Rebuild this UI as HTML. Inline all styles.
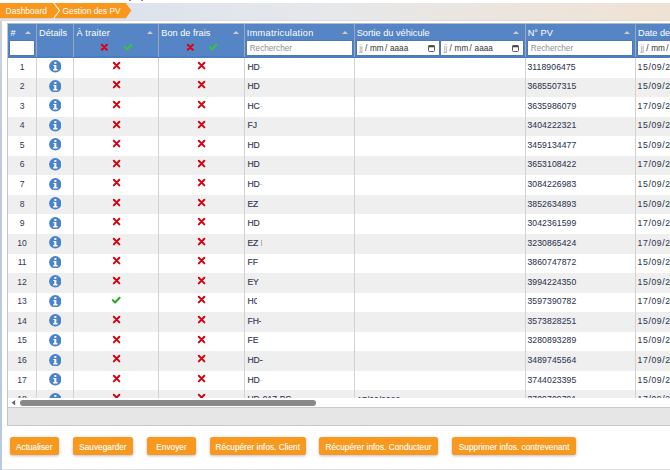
<!DOCTYPE html><html><head><meta charset="utf-8"><style>
html,body{margin:0;padding:0;}
body{width:670px;height:470px;overflow:hidden;position:relative;background:#fff;font-family:"Liberation Sans", sans-serif;}
.a{position:absolute;}
.t{position:absolute;white-space:nowrap;line-height:1;}
.b{-webkit-text-stroke:0.15px #2f3850;}
.n{-webkit-text-stroke:0.07px #2f3850;}
</style></head><body>
<div class="a" style="left:0;top:3px;width:670px;height:18px;background:linear-gradient(to right,#dde3ec 20%,#e7e8ea 50%,#efe2d2 100%);"></div>
<div class="a" style="left:0;top:20.2px;width:670px;height:1px;background:#d6d6d6;opacity:.7"></div>
<svg class="a" style="left:0;top:0" width="140" height="22" viewBox="0 0 140 22"><polygon points="0,3 125.8,3 131.3,10.6 125.8,18.2 0,18.2" fill="#f8971c"/><polyline points="53.8,3 59.6,10.6 53.8,18.2" fill="none" stroke="#fff6ec" stroke-width="1.1"/></svg>
<div class="t" style="left:5.6px;top:7.0px;font-size:8.4px;letter-spacing:0.05px;color:#fff;">Dashboard</div>
<div class="t" style="left:62.5px;top:7.0px;font-size:8.4px;color:#fff;">Gestion des PV</div>
<div class="a" style="left:0;top:20.5px;width:2px;height:450px;background:linear-gradient(to bottom,#cdd1d8,#bfcbdc 25%,#b9c8de)"></div>
<div class="a" style="left:2px;top:468.5px;width:668px;height:1.5px;background:#e2e2e2"></div>
<div class="a" style="left:7px;top:23px;width:663px;height:1px;background:#b8bcc4"></div>
<div class="a" style="left:7px;top:23px;width:1px;height:403px;background:#c4c4c4"></div>
<div class="a" style="left:8px;top:24px;width:662px;height:33.5px;background:#5585c5"></div>
<div class="a" style="left:8px;top:56px;width:662px;height:1.7px;background:#4b7dc0"></div>
<div class="a" style="left:8px;top:58.10px;width:662px;height:19.55px;background:#ffffff"></div>
<div class="a" style="left:8px;top:77.65px;width:662px;height:19.55px;background:#efefef"></div>
<div class="a" style="left:8px;top:97.20px;width:662px;height:19.55px;background:#ffffff"></div>
<div class="a" style="left:8px;top:116.75px;width:662px;height:19.55px;background:#efefef"></div>
<div class="a" style="left:8px;top:136.30px;width:662px;height:19.55px;background:#ffffff"></div>
<div class="a" style="left:8px;top:155.85px;width:662px;height:19.55px;background:#efefef"></div>
<div class="a" style="left:8px;top:175.40px;width:662px;height:19.55px;background:#ffffff"></div>
<div class="a" style="left:8px;top:194.95px;width:662px;height:19.55px;background:#efefef"></div>
<div class="a" style="left:8px;top:214.50px;width:662px;height:19.55px;background:#ffffff"></div>
<div class="a" style="left:8px;top:234.05px;width:662px;height:19.55px;background:#efefef"></div>
<div class="a" style="left:8px;top:253.60px;width:662px;height:19.55px;background:#ffffff"></div>
<div class="a" style="left:8px;top:273.15px;width:662px;height:19.55px;background:#efefef"></div>
<div class="a" style="left:8px;top:292.70px;width:662px;height:19.55px;background:#ffffff"></div>
<div class="a" style="left:8px;top:312.25px;width:662px;height:19.55px;background:#efefef"></div>
<div class="a" style="left:8px;top:331.80px;width:662px;height:19.55px;background:#ffffff"></div>
<div class="a" style="left:8px;top:351.35px;width:662px;height:19.55px;background:#efefef"></div>
<div class="a" style="left:8px;top:370.90px;width:662px;height:19.55px;background:#ffffff"></div>
<div class="a" style="left:8px;top:390.45px;width:662px;height:19.55px;background:#efefef"></div>
<div class="a" style="left:36.00px;top:24px;width:1px;height:33px;background:#9ba7b8"></div>
<div class="a" style="left:36.00px;top:57.5px;width:1px;height:340px;background:#d2d2d2"></div>
<div class="a" style="left:73.00px;top:24px;width:1px;height:33px;background:#9ba7b8"></div>
<div class="a" style="left:73.00px;top:57.5px;width:1px;height:340px;background:#d2d2d2"></div>
<div class="a" style="left:158.10px;top:24px;width:1px;height:33px;background:#9ba7b8"></div>
<div class="a" style="left:158.10px;top:57.5px;width:1px;height:340px;background:#d2d2d2"></div>
<div class="a" style="left:244.00px;top:24px;width:1px;height:33px;background:#9ba7b8"></div>
<div class="a" style="left:244.00px;top:57.5px;width:1px;height:340px;background:#d2d2d2"></div>
<div class="a" style="left:353.80px;top:24px;width:1px;height:33px;background:#9ba7b8"></div>
<div class="a" style="left:353.80px;top:57.5px;width:1px;height:340px;background:#d2d2d2"></div>
<div class="a" style="left:525.30px;top:24px;width:1px;height:33px;background:#9ba7b8"></div>
<div class="a" style="left:525.30px;top:57.5px;width:1px;height:340px;background:#d2d2d2"></div>
<div class="a" style="left:634.90px;top:24px;width:1px;height:33px;background:#9ba7b8"></div>
<div class="a" style="left:634.90px;top:57.5px;width:1px;height:340px;background:#d2d2d2"></div>
<div class="t" style="left:10.40px;top:28.7px;font-size:9.0px;letter-spacing:0.2px;color:#fff;">#</div>
<div class="t" style="left:39.10px;top:29.0px;font-size:9.2px;letter-spacing:0px;color:#fff;">Détails</div>
<div class="t" style="left:76.40px;top:29.0px;font-size:9.2px;letter-spacing:0.15px;color:#fff;">À traiter</div>
<div class="t" style="left:161.30px;top:29.0px;font-size:9.2px;letter-spacing:0px;color:#fff;">Bon de frais</div>
<div class="t" style="left:246.80px;top:29.0px;font-size:9.2px;letter-spacing:0.3px;color:#fff;">Immatriculation</div>
<div class="t" style="left:356.70px;top:29.0px;font-size:9.2px;letter-spacing:0px;color:#fff;">Sortie du véhicule</div>
<div class="t" style="left:527.70px;top:29.0px;font-size:9.2px;letter-spacing:0px;color:#fff;">N° PV</div>
<div class="t" style="left:638.00px;top:29.0px;font-size:9.2px;letter-spacing:0px;color:#fff;">Date de création</div>
<div style="position:absolute;left:24.90px;top:31.30px;width:0;height:0;border-left:3.3px solid transparent;border-right:3.3px solid transparent;border-bottom:3px solid #d5cbba"></div>
<div style="position:absolute;left:146.70px;top:31.30px;width:0;height:0;border-left:3.3px solid transparent;border-right:3.3px solid transparent;border-bottom:3px solid #d5cbba"></div>
<div style="position:absolute;left:232.70px;top:31.30px;width:0;height:0;border-left:3.3px solid transparent;border-right:3.3px solid transparent;border-bottom:3px solid #d5cbba"></div>
<div style="position:absolute;left:342.20px;top:31.30px;width:0;height:0;border-left:3.3px solid transparent;border-right:3.3px solid transparent;border-bottom:3px solid #d5cbba"></div>
<div style="position:absolute;left:513.30px;top:31.30px;width:0;height:0;border-left:3.3px solid transparent;border-right:3.3px solid transparent;border-bottom:3px solid #d5cbba"></div>
<div style="position:absolute;left:623.70px;top:31.30px;width:0;height:0;border-left:3.3px solid transparent;border-right:3.3px solid transparent;border-bottom:3px solid #d5cbba"></div>
<div class="a" style="left:10.20px;top:41px;width:24.00px;height:14.4px;background:#fff;box-shadow:0 0 0 0.6px #4672b4"></div>
<div class="a" style="left:246.70px;top:41px;width:105.50px;height:14.4px;background:#fff;box-shadow:0 0 0 0.6px #4672b4"></div><div class="t" style="left:249.70px;top:45.3px;font-size:8.2px;color:#8e8e8e;">Rechercher</div>
<div class="a" style="left:356.70px;top:41px;width:82.00px;height:14.4px;background:#fff;box-shadow:0 0 0 0.6px #4672b4"></div><div class="t" style="left:359.20px;top:44.6px;font-size:8.2px;color:#a0a0a0;">jj</div><div class="t" style="left:365.00px;top:44.6px;font-size:8.2px;color:#333;">/</div><div class="t" style="left:370.00px;top:44.6px;font-size:8.2px;color:#333;">mm</div><div class="t" style="left:385.00px;top:44.6px;font-size:8.2px;color:#333;">/</div><div class="t" style="left:390.00px;top:44.6px;font-size:8.2px;color:#333;">aaaa</div><svg class="a" style="left:427.50px;top:44.6px" width="7" height="7" viewBox="0 0 7 7"><rect x="0.5" y="0.5" width="6" height="6" rx="0.9" fill="none" stroke="#4a4a4a" stroke-width="0.9"/><rect x="0.5" y="0.5" width="6" height="1.8" fill="#4a4a4a"/></svg>
<div class="a" style="left:441.30px;top:41px;width:82.00px;height:14.4px;background:#fff;box-shadow:0 0 0 0.6px #4672b4"></div><div class="t" style="left:443.80px;top:44.6px;font-size:8.2px;color:#a0a0a0;">jj</div><div class="t" style="left:449.60px;top:44.6px;font-size:8.2px;color:#333;">/</div><div class="t" style="left:454.60px;top:44.6px;font-size:8.2px;color:#333;">mm</div><div class="t" style="left:469.60px;top:44.6px;font-size:8.2px;color:#333;">/</div><div class="t" style="left:474.60px;top:44.6px;font-size:8.2px;color:#333;">aaaa</div><svg class="a" style="left:512.10px;top:44.6px" width="7" height="7" viewBox="0 0 7 7"><rect x="0.5" y="0.5" width="6" height="6" rx="0.9" fill="none" stroke="#4a4a4a" stroke-width="0.9"/><rect x="0.5" y="0.5" width="6" height="1.8" fill="#4a4a4a"/></svg>
<div class="a" style="left:527.80px;top:41px;width:104.60px;height:14.4px;background:#fff;box-shadow:0 0 0 0.6px #4672b4"></div><div class="t" style="left:530.80px;top:45.3px;font-size:8.2px;color:#8e8e8e;">Rechercher</div>
<div class="a" style="left:638.00px;top:41px;width:122.00px;height:14.4px;background:#fff;box-shadow:0 0 0 0.6px #4672b4"></div><div class="t" style="left:640.50px;top:44.6px;font-size:8.2px;color:#a0a0a0;">jj</div><div class="t" style="left:646.30px;top:44.6px;font-size:8.2px;color:#333;">/</div><div class="t" style="left:651.30px;top:44.6px;font-size:8.2px;color:#333;">mm</div><div class="t" style="left:666.30px;top:44.6px;font-size:8.2px;color:#333;">/</div><div class="t" style="left:671.30px;top:44.6px;font-size:8.2px;color:#333;">aaaa</div><svg class="a" style="left:748.80px;top:44.6px" width="7" height="7" viewBox="0 0 7 7"><rect x="0.5" y="0.5" width="6" height="6" rx="0.9" fill="none" stroke="#4a4a4a" stroke-width="0.9"/><rect x="0.5" y="0.5" width="6" height="1.8" fill="#4a4a4a"/></svg>
<svg style="position:absolute;left:100.10px;top:42.90px" width="8.6" height="8.6" viewBox="-1 -1 8.6 8.6"><path d="M0.8 0.8 L5.8 5.8 M5.8 0.8 L0.8 5.8" stroke="#e00010" stroke-width="2.0" stroke-linecap="round"/></svg>
<svg style="position:absolute;left:122.70px;top:42.90px" width="10.2" height="8.2" viewBox="-1 -1 10.2 8.2"><path d="M0.8 3.10 L2.95 5.40 L7.40 0.8" fill="none" stroke="#2ecc2e" stroke-width="2.0" stroke-linecap="round" stroke-linejoin="round"/></svg>
<svg style="position:absolute;left:185.70px;top:42.90px" width="8.6" height="8.6" viewBox="-1 -1 8.6 8.6"><path d="M0.8 0.8 L5.8 5.8 M5.8 0.8 L0.8 5.8" stroke="#e00010" stroke-width="2.0" stroke-linecap="round"/></svg>
<svg style="position:absolute;left:208.10px;top:42.90px" width="10.2" height="8.2" viewBox="-1 -1 10.2 8.2"><path d="M0.8 3.10 L2.95 5.40 L7.40 0.8" fill="none" stroke="#2ecc2e" stroke-width="2.0" stroke-linecap="round" stroke-linejoin="round"/></svg>
<div class="t" style="left:14.10px;width:16px;text-align:center;top:62.73px;font-size:8.6px;color:#2f3850;">1</div>
<svg style="position:absolute;left:48.80px;top:60.28px" width="12.6" height="12.6" viewBox="0 0 12.6 12.6"><circle cx="6.3" cy="6.3" r="6.2" fill="#4a83ca"/><ellipse cx="6.35" cy="3.0" rx="1.25" ry="0.95" fill="#fff"/><path d="M4.4 4.9 L7.35 4.9 L7.35 9.1 L8.5 9.1 L8.5 10.4 L4.2 10.4 L4.2 9.1 L5.3 9.1 L5.3 6.1 L4.4 6.1 Z" fill="#fff"/></svg>
<svg style="position:absolute;left:111.60px;top:60.87px" width="9.2" height="9.2" viewBox="-1 -1 9.2 9.2"><path d="M0.8 0.8 L6.4 6.4 M6.4 0.8 L0.8 6.4" stroke="#d7000f" stroke-width="1.95" stroke-linecap="round"/></svg>
<svg style="position:absolute;left:196.90px;top:60.87px" width="9.2" height="9.2" viewBox="-1 -1 9.2 9.2"><path d="M0.8 0.8 L6.4 6.4 M6.4 0.8 L0.8 6.4" stroke="#d7000f" stroke-width="1.95" stroke-linecap="round"/></svg>
<div class="t b" style="left:247.4px;top:62.73px;font-size:8.6px;color:#2f3850;">HD<span style='display:inline-block;width:3px;overflow:hidden;vertical-align:top;color:#cfcfcf;-webkit-text-stroke:0'>-</span></div>
<div class="t n" style="left:527.4px;top:62.73px;font-size:8.6px;letter-spacing:0.12px;color:#2f3850;">3118906475</div>
<div class="t n" style="left:637.6px;top:62.73px;font-size:8.6px;letter-spacing:0.62px;color:#2f3850;">15/09/2022</div>
<div class="t" style="left:14.10px;width:16px;text-align:center;top:82.28px;font-size:8.6px;color:#2f3850;">2</div>
<svg style="position:absolute;left:48.80px;top:79.83px" width="12.6" height="12.6" viewBox="0 0 12.6 12.6"><circle cx="6.3" cy="6.3" r="6.2" fill="#4a83ca"/><ellipse cx="6.35" cy="3.0" rx="1.25" ry="0.95" fill="#fff"/><path d="M4.4 4.9 L7.35 4.9 L7.35 9.1 L8.5 9.1 L8.5 10.4 L4.2 10.4 L4.2 9.1 L5.3 9.1 L5.3 6.1 L4.4 6.1 Z" fill="#fff"/></svg>
<svg style="position:absolute;left:111.60px;top:80.43px" width="9.2" height="9.2" viewBox="-1 -1 9.2 9.2"><path d="M0.8 0.8 L6.4 6.4 M6.4 0.8 L0.8 6.4" stroke="#d7000f" stroke-width="1.95" stroke-linecap="round"/></svg>
<svg style="position:absolute;left:196.90px;top:80.43px" width="9.2" height="9.2" viewBox="-1 -1 9.2 9.2"><path d="M0.8 0.8 L6.4 6.4 M6.4 0.8 L0.8 6.4" stroke="#d7000f" stroke-width="1.95" stroke-linecap="round"/></svg>
<div class="t b" style="left:247.4px;top:82.28px;font-size:8.6px;color:#2f3850;">HD</div>
<div class="t n" style="left:527.4px;top:82.28px;font-size:8.6px;letter-spacing:0.12px;color:#2f3850;">3685507315</div>
<div class="t n" style="left:637.6px;top:82.28px;font-size:8.6px;letter-spacing:0.62px;color:#2f3850;">15/09/2022</div>
<div class="t" style="left:14.10px;width:16px;text-align:center;top:101.83px;font-size:8.6px;color:#2f3850;">3</div>
<svg style="position:absolute;left:48.80px;top:99.38px" width="12.6" height="12.6" viewBox="0 0 12.6 12.6"><circle cx="6.3" cy="6.3" r="6.2" fill="#4a83ca"/><ellipse cx="6.35" cy="3.0" rx="1.25" ry="0.95" fill="#fff"/><path d="M4.4 4.9 L7.35 4.9 L7.35 9.1 L8.5 9.1 L8.5 10.4 L4.2 10.4 L4.2 9.1 L5.3 9.1 L5.3 6.1 L4.4 6.1 Z" fill="#fff"/></svg>
<svg style="position:absolute;left:111.60px;top:99.98px" width="9.2" height="9.2" viewBox="-1 -1 9.2 9.2"><path d="M0.8 0.8 L6.4 6.4 M6.4 0.8 L0.8 6.4" stroke="#d7000f" stroke-width="1.95" stroke-linecap="round"/></svg>
<svg style="position:absolute;left:196.90px;top:99.98px" width="9.2" height="9.2" viewBox="-1 -1 9.2 9.2"><path d="M0.8 0.8 L6.4 6.4 M6.4 0.8 L0.8 6.4" stroke="#d7000f" stroke-width="1.95" stroke-linecap="round"/></svg>
<div class="t b" style="left:247.4px;top:101.83px;font-size:8.6px;color:#2f3850;">HC<span style='display:inline-block;width:3px;overflow:hidden;vertical-align:top;color:#cfcfcf;-webkit-text-stroke:0'>-</span></div>
<div class="t n" style="left:527.4px;top:101.83px;font-size:8.6px;letter-spacing:0.12px;color:#2f3850;">3635986079</div>
<div class="t n" style="left:637.6px;top:101.83px;font-size:8.6px;letter-spacing:0.62px;color:#2f3850;">17/09/2022</div>
<div class="t" style="left:14.10px;width:16px;text-align:center;top:121.38px;font-size:8.6px;color:#2f3850;">4</div>
<svg style="position:absolute;left:48.80px;top:118.93px" width="12.6" height="12.6" viewBox="0 0 12.6 12.6"><circle cx="6.3" cy="6.3" r="6.2" fill="#4a83ca"/><ellipse cx="6.35" cy="3.0" rx="1.25" ry="0.95" fill="#fff"/><path d="M4.4 4.9 L7.35 4.9 L7.35 9.1 L8.5 9.1 L8.5 10.4 L4.2 10.4 L4.2 9.1 L5.3 9.1 L5.3 6.1 L4.4 6.1 Z" fill="#fff"/></svg>
<svg style="position:absolute;left:111.60px;top:119.53px" width="9.2" height="9.2" viewBox="-1 -1 9.2 9.2"><path d="M0.8 0.8 L6.4 6.4 M6.4 0.8 L0.8 6.4" stroke="#d7000f" stroke-width="1.95" stroke-linecap="round"/></svg>
<svg style="position:absolute;left:196.90px;top:119.53px" width="9.2" height="9.2" viewBox="-1 -1 9.2 9.2"><path d="M0.8 0.8 L6.4 6.4 M6.4 0.8 L0.8 6.4" stroke="#d7000f" stroke-width="1.95" stroke-linecap="round"/></svg>
<div class="t b" style="left:247.4px;top:121.38px;font-size:8.6px;color:#2f3850;">FJ</div>
<div class="t n" style="left:527.4px;top:121.38px;font-size:8.6px;letter-spacing:0.12px;color:#2f3850;">3404222321</div>
<div class="t n" style="left:637.6px;top:121.38px;font-size:8.6px;letter-spacing:0.62px;color:#2f3850;">15/09/2022</div>
<div class="t" style="left:14.10px;width:16px;text-align:center;top:140.93px;font-size:8.6px;color:#2f3850;">5</div>
<svg style="position:absolute;left:48.80px;top:138.47px" width="12.6" height="12.6" viewBox="0 0 12.6 12.6"><circle cx="6.3" cy="6.3" r="6.2" fill="#4a83ca"/><ellipse cx="6.35" cy="3.0" rx="1.25" ry="0.95" fill="#fff"/><path d="M4.4 4.9 L7.35 4.9 L7.35 9.1 L8.5 9.1 L8.5 10.4 L4.2 10.4 L4.2 9.1 L5.3 9.1 L5.3 6.1 L4.4 6.1 Z" fill="#fff"/></svg>
<svg style="position:absolute;left:111.60px;top:139.08px" width="9.2" height="9.2" viewBox="-1 -1 9.2 9.2"><path d="M0.8 0.8 L6.4 6.4 M6.4 0.8 L0.8 6.4" stroke="#d7000f" stroke-width="1.95" stroke-linecap="round"/></svg>
<svg style="position:absolute;left:196.90px;top:139.08px" width="9.2" height="9.2" viewBox="-1 -1 9.2 9.2"><path d="M0.8 0.8 L6.4 6.4 M6.4 0.8 L0.8 6.4" stroke="#d7000f" stroke-width="1.95" stroke-linecap="round"/></svg>
<div class="t b" style="left:247.4px;top:140.93px;font-size:8.6px;color:#2f3850;">HD</div>
<div class="t n" style="left:527.4px;top:140.93px;font-size:8.6px;letter-spacing:0.12px;color:#2f3850;">3459134477</div>
<div class="t n" style="left:637.6px;top:140.93px;font-size:8.6px;letter-spacing:0.62px;color:#2f3850;">15/09/2022</div>
<div class="t" style="left:14.10px;width:16px;text-align:center;top:160.47px;font-size:8.6px;color:#2f3850;">6</div>
<svg style="position:absolute;left:48.80px;top:158.02px" width="12.6" height="12.6" viewBox="0 0 12.6 12.6"><circle cx="6.3" cy="6.3" r="6.2" fill="#4a83ca"/><ellipse cx="6.35" cy="3.0" rx="1.25" ry="0.95" fill="#fff"/><path d="M4.4 4.9 L7.35 4.9 L7.35 9.1 L8.5 9.1 L8.5 10.4 L4.2 10.4 L4.2 9.1 L5.3 9.1 L5.3 6.1 L4.4 6.1 Z" fill="#fff"/></svg>
<svg style="position:absolute;left:111.60px;top:158.62px" width="9.2" height="9.2" viewBox="-1 -1 9.2 9.2"><path d="M0.8 0.8 L6.4 6.4 M6.4 0.8 L0.8 6.4" stroke="#d7000f" stroke-width="1.95" stroke-linecap="round"/></svg>
<svg style="position:absolute;left:196.90px;top:158.62px" width="9.2" height="9.2" viewBox="-1 -1 9.2 9.2"><path d="M0.8 0.8 L6.4 6.4 M6.4 0.8 L0.8 6.4" stroke="#d7000f" stroke-width="1.95" stroke-linecap="round"/></svg>
<div class="t b" style="left:247.4px;top:160.47px;font-size:8.6px;color:#2f3850;">HD</div>
<div class="t n" style="left:527.4px;top:160.47px;font-size:8.6px;letter-spacing:0.12px;color:#2f3850;">3653108422</div>
<div class="t n" style="left:637.6px;top:160.47px;font-size:8.6px;letter-spacing:0.62px;color:#2f3850;">17/09/2022</div>
<div class="t" style="left:14.10px;width:16px;text-align:center;top:180.03px;font-size:8.6px;color:#2f3850;">7</div>
<svg style="position:absolute;left:48.80px;top:177.57px" width="12.6" height="12.6" viewBox="0 0 12.6 12.6"><circle cx="6.3" cy="6.3" r="6.2" fill="#4a83ca"/><ellipse cx="6.35" cy="3.0" rx="1.25" ry="0.95" fill="#fff"/><path d="M4.4 4.9 L7.35 4.9 L7.35 9.1 L8.5 9.1 L8.5 10.4 L4.2 10.4 L4.2 9.1 L5.3 9.1 L5.3 6.1 L4.4 6.1 Z" fill="#fff"/></svg>
<svg style="position:absolute;left:111.60px;top:178.18px" width="9.2" height="9.2" viewBox="-1 -1 9.2 9.2"><path d="M0.8 0.8 L6.4 6.4 M6.4 0.8 L0.8 6.4" stroke="#d7000f" stroke-width="1.95" stroke-linecap="round"/></svg>
<svg style="position:absolute;left:196.90px;top:178.18px" width="9.2" height="9.2" viewBox="-1 -1 9.2 9.2"><path d="M0.8 0.8 L6.4 6.4 M6.4 0.8 L0.8 6.4" stroke="#d7000f" stroke-width="1.95" stroke-linecap="round"/></svg>
<div class="t b" style="left:247.4px;top:180.03px;font-size:8.6px;color:#2f3850;">HD<span style='display:inline-block;width:3px;overflow:hidden;vertical-align:top;color:#c0c0c0;-webkit-text-stroke:0'>-</span></div>
<div class="t n" style="left:527.4px;top:180.03px;font-size:8.6px;letter-spacing:0.12px;color:#2f3850;">3084226983</div>
<div class="t n" style="left:637.6px;top:180.03px;font-size:8.6px;letter-spacing:0.62px;color:#2f3850;">15/09/2022</div>
<div class="t" style="left:14.10px;width:16px;text-align:center;top:199.57px;font-size:8.6px;color:#2f3850;">8</div>
<svg style="position:absolute;left:48.80px;top:197.12px" width="12.6" height="12.6" viewBox="0 0 12.6 12.6"><circle cx="6.3" cy="6.3" r="6.2" fill="#4a83ca"/><ellipse cx="6.35" cy="3.0" rx="1.25" ry="0.95" fill="#fff"/><path d="M4.4 4.9 L7.35 4.9 L7.35 9.1 L8.5 9.1 L8.5 10.4 L4.2 10.4 L4.2 9.1 L5.3 9.1 L5.3 6.1 L4.4 6.1 Z" fill="#fff"/></svg>
<svg style="position:absolute;left:111.60px;top:197.72px" width="9.2" height="9.2" viewBox="-1 -1 9.2 9.2"><path d="M0.8 0.8 L6.4 6.4 M6.4 0.8 L0.8 6.4" stroke="#d7000f" stroke-width="1.95" stroke-linecap="round"/></svg>
<svg style="position:absolute;left:196.90px;top:197.72px" width="9.2" height="9.2" viewBox="-1 -1 9.2 9.2"><path d="M0.8 0.8 L6.4 6.4 M6.4 0.8 L0.8 6.4" stroke="#d7000f" stroke-width="1.95" stroke-linecap="round"/></svg>
<div class="t b" style="left:247.4px;top:199.57px;font-size:8.6px;color:#2f3850;">EZ</div>
<div class="t n" style="left:527.4px;top:199.57px;font-size:8.6px;letter-spacing:0.12px;color:#2f3850;">3852634893</div>
<div class="t n" style="left:637.6px;top:199.57px;font-size:8.6px;letter-spacing:0.62px;color:#2f3850;">15/09/2022</div>
<div class="t" style="left:14.10px;width:16px;text-align:center;top:219.12px;font-size:8.6px;color:#2f3850;">9</div>
<svg style="position:absolute;left:48.80px;top:216.67px" width="12.6" height="12.6" viewBox="0 0 12.6 12.6"><circle cx="6.3" cy="6.3" r="6.2" fill="#4a83ca"/><ellipse cx="6.35" cy="3.0" rx="1.25" ry="0.95" fill="#fff"/><path d="M4.4 4.9 L7.35 4.9 L7.35 9.1 L8.5 9.1 L8.5 10.4 L4.2 10.4 L4.2 9.1 L5.3 9.1 L5.3 6.1 L4.4 6.1 Z" fill="#fff"/></svg>
<svg style="position:absolute;left:111.60px;top:217.28px" width="9.2" height="9.2" viewBox="-1 -1 9.2 9.2"><path d="M0.8 0.8 L6.4 6.4 M6.4 0.8 L0.8 6.4" stroke="#d7000f" stroke-width="1.95" stroke-linecap="round"/></svg>
<svg style="position:absolute;left:196.90px;top:217.28px" width="9.2" height="9.2" viewBox="-1 -1 9.2 9.2"><path d="M0.8 0.8 L6.4 6.4 M6.4 0.8 L0.8 6.4" stroke="#d7000f" stroke-width="1.95" stroke-linecap="round"/></svg>
<div class="t b" style="left:247.4px;top:219.12px;font-size:8.6px;color:#2f3850;">HD</div>
<div class="t n" style="left:527.4px;top:219.12px;font-size:8.6px;letter-spacing:0.12px;color:#2f3850;">3042361599</div>
<div class="t n" style="left:637.6px;top:219.12px;font-size:8.6px;letter-spacing:0.62px;color:#2f3850;">17/09/2022</div>
<div class="t" style="left:14.10px;width:16px;text-align:center;top:238.68px;font-size:8.6px;color:#2f3850;">10</div>
<svg style="position:absolute;left:48.80px;top:236.22px" width="12.6" height="12.6" viewBox="0 0 12.6 12.6"><circle cx="6.3" cy="6.3" r="6.2" fill="#4a83ca"/><ellipse cx="6.35" cy="3.0" rx="1.25" ry="0.95" fill="#fff"/><path d="M4.4 4.9 L7.35 4.9 L7.35 9.1 L8.5 9.1 L8.5 10.4 L4.2 10.4 L4.2 9.1 L5.3 9.1 L5.3 6.1 L4.4 6.1 Z" fill="#fff"/></svg>
<svg style="position:absolute;left:111.60px;top:236.83px" width="9.2" height="9.2" viewBox="-1 -1 9.2 9.2"><path d="M0.8 0.8 L6.4 6.4 M6.4 0.8 L0.8 6.4" stroke="#d7000f" stroke-width="1.95" stroke-linecap="round"/></svg>
<svg style="position:absolute;left:196.90px;top:236.83px" width="9.2" height="9.2" viewBox="-1 -1 9.2 9.2"><path d="M0.8 0.8 L6.4 6.4 M6.4 0.8 L0.8 6.4" stroke="#d7000f" stroke-width="1.95" stroke-linecap="round"/></svg>
<div class="t b" style="left:247.4px;top:238.68px;font-size:8.6px;color:#2f3850;">EZ <span style='display:inline-block;width:1px;height:6px;background:#a89080;vertical-align:top;margin-top:1.5px;margin-left:0.6px;opacity:.7'></span></div>
<div class="t n" style="left:527.4px;top:238.68px;font-size:8.6px;letter-spacing:0.12px;color:#2f3850;">3230865424</div>
<div class="t n" style="left:637.6px;top:238.68px;font-size:8.6px;letter-spacing:0.62px;color:#2f3850;">17/09/2022</div>
<div class="t" style="left:14.10px;width:16px;text-align:center;top:258.23px;font-size:8.6px;color:#2f3850;">11</div>
<svg style="position:absolute;left:48.80px;top:255.77px" width="12.6" height="12.6" viewBox="0 0 12.6 12.6"><circle cx="6.3" cy="6.3" r="6.2" fill="#4a83ca"/><ellipse cx="6.35" cy="3.0" rx="1.25" ry="0.95" fill="#fff"/><path d="M4.4 4.9 L7.35 4.9 L7.35 9.1 L8.5 9.1 L8.5 10.4 L4.2 10.4 L4.2 9.1 L5.3 9.1 L5.3 6.1 L4.4 6.1 Z" fill="#fff"/></svg>
<svg style="position:absolute;left:111.60px;top:256.38px" width="9.2" height="9.2" viewBox="-1 -1 9.2 9.2"><path d="M0.8 0.8 L6.4 6.4 M6.4 0.8 L0.8 6.4" stroke="#d7000f" stroke-width="1.95" stroke-linecap="round"/></svg>
<svg style="position:absolute;left:196.90px;top:256.38px" width="9.2" height="9.2" viewBox="-1 -1 9.2 9.2"><path d="M0.8 0.8 L6.4 6.4 M6.4 0.8 L0.8 6.4" stroke="#d7000f" stroke-width="1.95" stroke-linecap="round"/></svg>
<div class="t b" style="left:247.4px;top:258.23px;font-size:8.6px;color:#2f3850;">FF</div>
<div class="t n" style="left:527.4px;top:258.23px;font-size:8.6px;letter-spacing:0.12px;color:#2f3850;">3860747872</div>
<div class="t n" style="left:637.6px;top:258.23px;font-size:8.6px;letter-spacing:0.62px;color:#2f3850;">15/09/2022</div>
<div class="t" style="left:14.10px;width:16px;text-align:center;top:277.78px;font-size:8.6px;color:#2f3850;">12</div>
<svg style="position:absolute;left:48.80px;top:275.32px" width="12.6" height="12.6" viewBox="0 0 12.6 12.6"><circle cx="6.3" cy="6.3" r="6.2" fill="#4a83ca"/><ellipse cx="6.35" cy="3.0" rx="1.25" ry="0.95" fill="#fff"/><path d="M4.4 4.9 L7.35 4.9 L7.35 9.1 L8.5 9.1 L8.5 10.4 L4.2 10.4 L4.2 9.1 L5.3 9.1 L5.3 6.1 L4.4 6.1 Z" fill="#fff"/></svg>
<svg style="position:absolute;left:111.60px;top:275.93px" width="9.2" height="9.2" viewBox="-1 -1 9.2 9.2"><path d="M0.8 0.8 L6.4 6.4 M6.4 0.8 L0.8 6.4" stroke="#d7000f" stroke-width="1.95" stroke-linecap="round"/></svg>
<svg style="position:absolute;left:196.90px;top:275.93px" width="9.2" height="9.2" viewBox="-1 -1 9.2 9.2"><path d="M0.8 0.8 L6.4 6.4 M6.4 0.8 L0.8 6.4" stroke="#d7000f" stroke-width="1.95" stroke-linecap="round"/></svg>
<div class="t b" style="left:247.4px;top:277.78px;font-size:8.6px;color:#2f3850;">EY</div>
<div class="t n" style="left:527.4px;top:277.78px;font-size:8.6px;letter-spacing:0.12px;color:#2f3850;">3994224350</div>
<div class="t n" style="left:637.6px;top:277.78px;font-size:8.6px;letter-spacing:0.62px;color:#2f3850;">15/09/2022</div>
<div class="t" style="left:14.10px;width:16px;text-align:center;top:297.33px;font-size:8.6px;color:#2f3850;">13</div>
<svg style="position:absolute;left:48.80px;top:294.88px" width="12.6" height="12.6" viewBox="0 0 12.6 12.6"><circle cx="6.3" cy="6.3" r="6.2" fill="#4a83ca"/><ellipse cx="6.35" cy="3.0" rx="1.25" ry="0.95" fill="#fff"/><path d="M4.4 4.9 L7.35 4.9 L7.35 9.1 L8.5 9.1 L8.5 10.4 L4.2 10.4 L4.2 9.1 L5.3 9.1 L5.3 6.1 L4.4 6.1 Z" fill="#fff"/></svg>
<svg style="position:absolute;left:110.90px;top:295.63px" width="10.4" height="8.3" viewBox="-1 -1 10.4 8.3"><path d="M0.8 3.15 L3.02 5.50 L7.60 0.8" fill="none" stroke="#22a822" stroke-width="2.0" stroke-linecap="round" stroke-linejoin="round"/></svg>
<svg style="position:absolute;left:196.90px;top:295.48px" width="9.2" height="9.2" viewBox="-1 -1 9.2 9.2"><path d="M0.8 0.8 L6.4 6.4 M6.4 0.8 L0.8 6.4" stroke="#d7000f" stroke-width="1.95" stroke-linecap="round"/></svg>
<div class="t b" style="left:247.4px;top:297.33px;font-size:8.6px;color:#2f3850;">H<span style='display:inline-block;width:3.3px;overflow:hidden;vertical-align:top;'>C</span></div>
<div class="t n" style="left:527.4px;top:297.33px;font-size:8.6px;letter-spacing:0.12px;color:#2f3850;">3597390782</div>
<div class="t n" style="left:637.6px;top:297.33px;font-size:8.6px;letter-spacing:0.62px;color:#2f3850;">17/09/2022</div>
<div class="t" style="left:14.10px;width:16px;text-align:center;top:316.88px;font-size:8.6px;color:#2f3850;">14</div>
<svg style="position:absolute;left:48.80px;top:314.42px" width="12.6" height="12.6" viewBox="0 0 12.6 12.6"><circle cx="6.3" cy="6.3" r="6.2" fill="#4a83ca"/><ellipse cx="6.35" cy="3.0" rx="1.25" ry="0.95" fill="#fff"/><path d="M4.4 4.9 L7.35 4.9 L7.35 9.1 L8.5 9.1 L8.5 10.4 L4.2 10.4 L4.2 9.1 L5.3 9.1 L5.3 6.1 L4.4 6.1 Z" fill="#fff"/></svg>
<svg style="position:absolute;left:111.60px;top:315.02px" width="9.2" height="9.2" viewBox="-1 -1 9.2 9.2"><path d="M0.8 0.8 L6.4 6.4 M6.4 0.8 L0.8 6.4" stroke="#d7000f" stroke-width="1.95" stroke-linecap="round"/></svg>
<svg style="position:absolute;left:196.90px;top:315.02px" width="9.2" height="9.2" viewBox="-1 -1 9.2 9.2"><path d="M0.8 0.8 L6.4 6.4 M6.4 0.8 L0.8 6.4" stroke="#d7000f" stroke-width="1.95" stroke-linecap="round"/></svg>
<div class="t b" style="left:247.4px;top:316.88px;font-size:8.6px;color:#2f3850;">FH<span style='display:inline-block;width:2.2px;overflow:hidden;vertical-align:top;'>-</span></div>
<div class="t n" style="left:527.4px;top:316.88px;font-size:8.6px;letter-spacing:0.12px;color:#2f3850;">3573828251</div>
<div class="t n" style="left:637.6px;top:316.88px;font-size:8.6px;letter-spacing:0.62px;color:#2f3850;">15/09/2022</div>
<div class="t" style="left:14.10px;width:16px;text-align:center;top:336.43px;font-size:8.6px;color:#2f3850;">15</div>
<svg style="position:absolute;left:48.80px;top:333.97px" width="12.6" height="12.6" viewBox="0 0 12.6 12.6"><circle cx="6.3" cy="6.3" r="6.2" fill="#4a83ca"/><ellipse cx="6.35" cy="3.0" rx="1.25" ry="0.95" fill="#fff"/><path d="M4.4 4.9 L7.35 4.9 L7.35 9.1 L8.5 9.1 L8.5 10.4 L4.2 10.4 L4.2 9.1 L5.3 9.1 L5.3 6.1 L4.4 6.1 Z" fill="#fff"/></svg>
<svg style="position:absolute;left:111.60px;top:334.57px" width="9.2" height="9.2" viewBox="-1 -1 9.2 9.2"><path d="M0.8 0.8 L6.4 6.4 M6.4 0.8 L0.8 6.4" stroke="#d7000f" stroke-width="1.95" stroke-linecap="round"/></svg>
<svg style="position:absolute;left:196.90px;top:334.57px" width="9.2" height="9.2" viewBox="-1 -1 9.2 9.2"><path d="M0.8 0.8 L6.4 6.4 M6.4 0.8 L0.8 6.4" stroke="#d7000f" stroke-width="1.95" stroke-linecap="round"/></svg>
<div class="t b" style="left:247.4px;top:336.43px;font-size:8.6px;color:#2f3850;">FE</div>
<div class="t n" style="left:527.4px;top:336.43px;font-size:8.6px;letter-spacing:0.12px;color:#2f3850;">3280893289</div>
<div class="t n" style="left:637.6px;top:336.43px;font-size:8.6px;letter-spacing:0.62px;color:#2f3850;">15/09/2022</div>
<div class="t" style="left:14.10px;width:16px;text-align:center;top:355.98px;font-size:8.6px;color:#2f3850;">16</div>
<svg style="position:absolute;left:48.80px;top:353.52px" width="12.6" height="12.6" viewBox="0 0 12.6 12.6"><circle cx="6.3" cy="6.3" r="6.2" fill="#4a83ca"/><ellipse cx="6.35" cy="3.0" rx="1.25" ry="0.95" fill="#fff"/><path d="M4.4 4.9 L7.35 4.9 L7.35 9.1 L8.5 9.1 L8.5 10.4 L4.2 10.4 L4.2 9.1 L5.3 9.1 L5.3 6.1 L4.4 6.1 Z" fill="#fff"/></svg>
<svg style="position:absolute;left:111.60px;top:354.12px" width="9.2" height="9.2" viewBox="-1 -1 9.2 9.2"><path d="M0.8 0.8 L6.4 6.4 M6.4 0.8 L0.8 6.4" stroke="#d7000f" stroke-width="1.95" stroke-linecap="round"/></svg>
<svg style="position:absolute;left:196.90px;top:354.12px" width="9.2" height="9.2" viewBox="-1 -1 9.2 9.2"><path d="M0.8 0.8 L6.4 6.4 M6.4 0.8 L0.8 6.4" stroke="#d7000f" stroke-width="1.95" stroke-linecap="round"/></svg>
<div class="t b" style="left:247.4px;top:355.98px;font-size:8.6px;color:#2f3850;">HD-<span style='display:inline-block;width:1.2px;overflow:hidden;vertical-align:top;color:#cfcfcf;-webkit-text-stroke:0'>-</span></div>
<div class="t n" style="left:527.4px;top:355.98px;font-size:8.6px;letter-spacing:0.12px;color:#2f3850;">3489745564</div>
<div class="t n" style="left:637.6px;top:355.98px;font-size:8.6px;letter-spacing:0.62px;color:#2f3850;">17/09/2022</div>
<div class="t" style="left:14.10px;width:16px;text-align:center;top:375.53px;font-size:8.6px;color:#2f3850;">17</div>
<svg style="position:absolute;left:48.80px;top:373.07px" width="12.6" height="12.6" viewBox="0 0 12.6 12.6"><circle cx="6.3" cy="6.3" r="6.2" fill="#4a83ca"/><ellipse cx="6.35" cy="3.0" rx="1.25" ry="0.95" fill="#fff"/><path d="M4.4 4.9 L7.35 4.9 L7.35 9.1 L8.5 9.1 L8.5 10.4 L4.2 10.4 L4.2 9.1 L5.3 9.1 L5.3 6.1 L4.4 6.1 Z" fill="#fff"/></svg>
<svg style="position:absolute;left:111.60px;top:373.68px" width="9.2" height="9.2" viewBox="-1 -1 9.2 9.2"><path d="M0.8 0.8 L6.4 6.4 M6.4 0.8 L0.8 6.4" stroke="#d7000f" stroke-width="1.95" stroke-linecap="round"/></svg>
<svg style="position:absolute;left:196.90px;top:373.68px" width="9.2" height="9.2" viewBox="-1 -1 9.2 9.2"><path d="M0.8 0.8 L6.4 6.4 M6.4 0.8 L0.8 6.4" stroke="#d7000f" stroke-width="1.95" stroke-linecap="round"/></svg>
<div class="t b" style="left:247.4px;top:375.53px;font-size:8.6px;color:#2f3850;">HD<span style='display:inline-block;width:3px;overflow:hidden;vertical-align:top;color:#cfcfcf;-webkit-text-stroke:0'>-</span></div>
<div class="t n" style="left:527.4px;top:375.53px;font-size:8.6px;letter-spacing:0.12px;color:#2f3850;">3744023395</div>
<div class="t n" style="left:637.6px;top:375.53px;font-size:8.6px;letter-spacing:0.62px;color:#2f3850;">15/09/2022</div>
<div class="t" style="left:14.10px;width:16px;text-align:center;top:395.08px;font-size:8.6px;color:#2f3850;">18</div>
<svg style="position:absolute;left:48.80px;top:392.62px" width="12.6" height="12.6" viewBox="0 0 12.6 12.6"><circle cx="6.3" cy="6.3" r="6.2" fill="#4a83ca"/><ellipse cx="6.35" cy="3.0" rx="1.25" ry="0.95" fill="#fff"/><path d="M4.4 4.9 L7.35 4.9 L7.35 9.1 L8.5 9.1 L8.5 10.4 L4.2 10.4 L4.2 9.1 L5.3 9.1 L5.3 6.1 L4.4 6.1 Z" fill="#fff"/></svg>
<svg style="position:absolute;left:111.60px;top:393.23px" width="9.2" height="9.2" viewBox="-1 -1 9.2 9.2"><path d="M0.8 0.8 L6.4 6.4 M6.4 0.8 L0.8 6.4" stroke="#d7000f" stroke-width="1.95" stroke-linecap="round"/></svg>
<svg style="position:absolute;left:196.90px;top:393.23px" width="9.2" height="9.2" viewBox="-1 -1 9.2 9.2"><path d="M0.8 0.8 L6.4 6.4 M6.4 0.8 L0.8 6.4" stroke="#d7000f" stroke-width="1.95" stroke-linecap="round"/></svg>
<div class="t b" style="left:247.4px;top:395.08px;font-size:8.6px;color:#2f3850;">HD-917-BS</div>
<div class="t n" style="left:527.4px;top:395.08px;font-size:8.6px;letter-spacing:0.12px;color:#2f3850;">3709709791</div>
<div class="t n" style="left:637.6px;top:395.08px;font-size:8.6px;letter-spacing:0.62px;color:#2f3850;">17/09/2022</div>
<div class="t n" style="left:357.2px;top:396.28px;font-size:8.6px;color:#2f3850;">17/09/2022</div>
<div class="a" style="left:129px;top:0;width:1.6px;height:1.2px;background:#556;opacity:.7"></div>
<div class="a" style="left:141.3px;top:0;width:1.6px;height:1.2px;background:#556;opacity:.7"></div>
<div class="a" style="left:8px;top:398px;width:662px;height:9.6px;background:#fff"></div>
<div class="a" style="left:19.8px;top:400.2px;width:296px;height:6px;border-radius:3px;background:#898989"></div>
<svg class="a" style="left:10px;top:398px" width="8" height="10" viewBox="10 398 8 10"><polygon points="15.2,400 11.6,402.8 15.2,405.6" fill="#666"/></svg>
<div class="a" style="left:7px;top:407px;width:663px;height:18.6px;background:#e6e6e6;border-top:1.4px solid #cacaca;border-bottom:1px solid #c8c8c8;border-left:1px solid #c4c4c4;box-sizing:border-box"></div>
<div class="a" style="left:9.9px;top:437.3px;width:48.70px;height:17.9px;background:#f8981c;border-radius:2.6px;box-shadow:0 1px 3px rgba(80,100,140,.42);"></div>
<div class="t" style="left:9.9px;width:48.70px;text-align:center;top:443.6px;font-size:8.2px;color:#fff;-webkit-text-stroke:0.12px #fff;letter-spacing:0.05px;">Actualiser</div>
<div class="a" style="left:73.0px;top:437.3px;width:59.90px;height:17.9px;background:#f8981c;border-radius:2.6px;box-shadow:0 1px 3px rgba(80,100,140,.42);"></div>
<div class="t" style="left:73.0px;width:59.90px;text-align:center;top:443.6px;font-size:8.2px;color:#fff;-webkit-text-stroke:0.12px #fff;letter-spacing:0.05px;">Sauvegarder</div>
<div class="a" style="left:147.1px;top:437.3px;width:48.90px;height:17.9px;background:#f8981c;border-radius:2.6px;box-shadow:0 1px 3px rgba(80,100,140,.42);"></div>
<div class="t" style="left:147.1px;width:48.90px;text-align:center;top:443.6px;font-size:8.2px;color:#fff;-webkit-text-stroke:0.12px #fff;letter-spacing:0.05px;">Envoyer</div>
<div class="a" style="left:210px;top:437.3px;width:95.60px;height:17.9px;background:#f8981c;border-radius:2.6px;box-shadow:0 1px 3px rgba(80,100,140,.42);"></div>
<div class="t" style="left:210px;width:95.60px;text-align:center;top:443.6px;font-size:8.2px;color:#fff;-webkit-text-stroke:0.12px #fff;letter-spacing:0.05px;">Récupérer infos. Client</div>
<div class="a" style="left:319.4px;top:437.3px;width:118.30px;height:17.9px;background:#f8981c;border-radius:2.6px;box-shadow:0 1px 3px rgba(80,100,140,.42);"></div>
<div class="t" style="left:319.4px;width:118.30px;text-align:center;top:443.6px;font-size:8.2px;color:#fff;-webkit-text-stroke:0.12px #fff;letter-spacing:0.05px;">Récupérer infos. Conducteur</div>
<div class="a" style="left:452.2px;top:437.3px;width:124.00px;height:17.9px;background:#f8981c;border-radius:2.6px;box-shadow:0 1px 3px rgba(80,100,140,.42);"></div>
<div class="t" style="left:452.2px;width:124.00px;text-align:center;top:443.6px;font-size:8.2px;color:#fff;-webkit-text-stroke:0.12px #fff;letter-spacing:0.05px;">Supprimer infos. contrevenant</div>
</body></html>
